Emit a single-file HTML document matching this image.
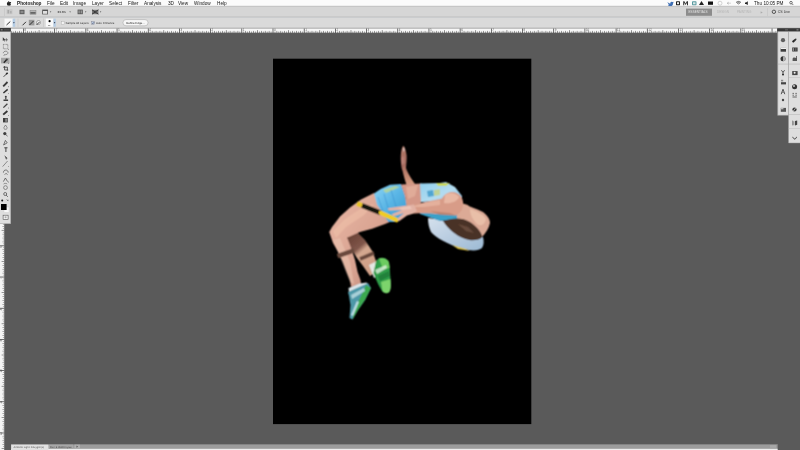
<!DOCTYPE html>
<html><head><meta charset="utf-8">
<style>
*{margin:0;padding:0}
html,body{width:800px;height:450px;overflow:hidden;background:#5a5a5a}
svg{position:absolute;left:0;top:0;font-family:"Liberation Sans",sans-serif}
#chrome{will-change:transform}
</style></head><body>
<svg width="800" height="450" viewBox="0 0 800 450"><rect x="273" y="58.7" width="258.3" height="365.4" fill="#000"/><defs>
<filter id="bl" x="-10%" y="-10%" width="120%" height="120%"><feConvolveMatrix order="3" kernelMatrix="1 2 1 2 4 2 1 2 1" divisor="16" preserveAlpha="false" edgeMode="none"/></filter>
<linearGradient id="gThigh" x1="0" y1="0" x2="1" y2="1">
<stop offset="0" stop-color="#eab8a6"/><stop offset="0.6" stop-color="#d8a290"/><stop offset="1" stop-color="#bc8878"/>
</linearGradient>
<linearGradient id="gArm" x1="0" y1="0" x2="0" y2="1">
<stop offset="0" stop-color="#e8b8a0"/><stop offset="1" stop-color="#c08068"/>
</linearGradient>
<linearGradient id="gShorts" x1="0" y1="0" x2="1" y2="1">
<stop offset="0" stop-color="#8cd4f4"/><stop offset="0.5" stop-color="#58b4e4"/><stop offset="1" stop-color="#3a98cc"/>
</linearGradient>
<linearGradient id="gTop" x1="0" y1="0" x2="1" y2="1">
<stop offset="0" stop-color="#90d0ee"/><stop offset="0.55" stop-color="#b4dcf0"/><stop offset="1" stop-color="#68b8e0"/>
</linearGradient>
<linearGradient id="gBib" x1="0" y1="0" x2="1" y2="1">
<stop offset="0" stop-color="#d4e0ec"/><stop offset="0.5" stop-color="#b8cce0"/><stop offset="1" stop-color="#9cbad4"/>
</linearGradient>
<linearGradient id="gBack" x1="350" y1="236" x2="372" y2="262" gradientUnits="userSpaceOnUse">
<stop offset="0" stop-color="#6a4236"/><stop offset="0.42" stop-color="#80564a"/><stop offset="0.58" stop-color="#d4a890"/><stop offset="1" stop-color="#d0a088"/>
</linearGradient>
<linearGradient id="gRaise" x1="0" y1="145" x2="0" y2="186" gradientUnits="userSpaceOnUse">
<stop offset="0" stop-color="#b07868"/><stop offset="0.5" stop-color="#a86c60"/><stop offset="0.8" stop-color="#c88c74"/><stop offset="1" stop-color="#d8a088"/>
</linearGradient>
</defs>
<g filter="url(#bl)">
<!-- bib / flap -->
<path d="M428 218 C438 219 448 221 456 227 C464 233 472 238 483 237 C484 241 484 245 482 248 C478 251.5 470 251 460 248 C448 244 436 238 431 232 C429 228 428 223 428 218 Z" fill="url(#gBib)"/>
<path d="M452 245 L466 249 L470 251 L458 249 Z" fill="#d8c040"/>
<!-- raised arm -->
<path d="M403.4 145.8 C404.9 147 406 151 406.6 155.5 C406.9 160 406.2 164 406 168 C407.6 173 410.8 178 416 185.5 L407 186 C405.2 181 403.6 175.5 402.6 171 C401.2 167.5 400.6 161 400.8 155.5 C401 150.5 402 147 403.4 145.8 Z" fill="url(#gRaise)"/>
<path d="M402.6 148.5 L404.2 147 L405 150 L403.5 152 Z" fill="#e0c8c0" opacity="0.8"/><path d="M401 158 L404 156 L404.5 163 L402 165 Z" fill="#c89088" opacity="0.5"/>
<!-- back shin (darker) -->
<path d="M345 237 L357 232 L365 240 L372.8 252 L377 264 L379 270 L370 276 L363 266 L357 258 L352 250 Z" fill="url(#gBack)"/>
<!-- front leg thigh + shin -->
<path d="M374 193 L361 199.5 L350 207.5 L340 216.5 L332 227 L329.2 232 L333 243 L338.7 253 L343 262 L346 270 L350 280 L351 287 L361 284 L360.5 280 L357.6 272 L355 260 L351.4 248.7 L347 237.5 L349.8 236.4 L359.8 232 L372 228.7 L385 224 L392 221 L385 215 Z" fill="url(#gThigh)"/>
<path d="M333 231 L345 219 L360 209 L374 204 L364 215 L346 227 L336 238 Z" fill="#eec0a8" opacity="0.6"/><path d="M333 240 L340 238 L350 262 L354 284 L350 282 L342 262 Z" fill="#ecc8b4" opacity="0.5"/>
<!-- bands -->
<path d="M337.5 256.2 L354 250.3" stroke="#6a4a3c" stroke-width="4.6"/>
<path d="M360 259 L374 253" stroke="#6a4a3c" stroke-width="3.6"/>
<!-- socks -->
<path d="M348.5 288 L360 283.5 L366.5 282.5 L368.5 285.5 L349 292.5 Z" fill="#dce6ea"/>
<path d="M369 265 L379 260 L383 272 L374 278 Z" fill="#e4e8e4"/>
<!-- back shoe -->
<path d="M376 261 C378 258 382 256.8 385.5 258.5 C389 260.5 389.8 266 390 272 C390.5 280 391.5 287 389.5 291.5 C388 294 384 293.5 382 291 C379.5 287 376 280 373.5 273 Z" fill="#2f9c48"/>
<path d="M379 258.5 C382 257 387 258.5 389 262 L389.8 268 L383 269 Z" fill="#6ccc60"/>
<path d="M381 282 L390.4 279 C391 284 391.2 289 389.5 291.5 C388 294 384 293.5 382.5 291 Z" fill="#7cd46c"/>
<path d="M375 270 L386 265 L387 268 L377 274 Z" fill="#e0f0e0" opacity="0.8"/><path d="M378 276 L389 271 L390 276 L380 281 Z" fill="#1e7a38" opacity="0.8"/>
<!-- front shoe -->
<path d="M348 292 L358 287.5 L368 283 L371 288 L365 300 L358 310 L352.5 319.5 L349.5 318 L350.5 305 L349 296 Z" fill="#4e98a8"/>
<path d="M366 285 L371 288 L365 300 L358 310 L352.5 319.5 L354 310 L360 298 Z" fill="#3aa850"/>
<path d="M351 295 L364 288 L365 291 L352 299 Z" fill="#a8d0d8"/>
<path d="M351 315 L357 301 L359 302 L353 316 Z" fill="#c8e4f0" opacity="0.9"/>
<!-- shorts -->
<path d="M374 193.6 L380.6 189 L390 184.7 L401 184 L405 195 L407 205 L405 214 L397 222 L388.3 222 L381.7 211.3 L377 204.7 Z" fill="url(#gShorts)"/>
<path d="M383 190 L395 186 L400 187 L386 193 Z" fill="#d8e070" opacity="0.6"/>
<path d="M384 194 L390 214 M391 190 L397 210 M378 197 L384 214" stroke="#3a90d0" stroke-width="1" opacity="0.6"/>
<!-- bar -->
<path d="M357 203.5 L362 205.5" stroke="#e8c428" stroke-width="4.8"/>
<path d="M362 205.5 L381 213" stroke="#18180c" stroke-width="4.8"/>
<path d="M381 213 L396.5 220" stroke="#f0cc20" stroke-width="4.6" stroke-linecap="round"/>
<!-- midriff -->
<path d="M401 184.5 L421.5 183.5 L423 200 L418 206 L407 209 L405 196 Z" fill="#d49888"/>
<path d="M406 187 L418 185 L415 196 L408 199 Z" fill="#e8b8a4" opacity="0.6"/>
<!-- top -->
<path d="M420 183.5 L440 183 L446 182 L455 187 L462 196 L462 205 L445 201 L421 202 Z" fill="url(#gTop)"/><path d="M427 191 L433 190 L434 196 L428 197 Z" fill="#3a98c8" opacity="0.8"/><path d="M434 190 L440 189 L440 195 L434 196 Z" fill="#c8d070" opacity="0.7"/>
<path d="M436 183 L450 183 L446 186 L438 186 Z" fill="#c8d860"/>
<!-- blue side under arm -->
<path d="M417 205 L440 211 L458 213 L462 210 L459 220 L440 221 L420 214 Z" fill="#3aa0c8"/>
<!-- neck -->
<path d="M458 202 L468 205 L474 214 L468 219 L458 214 Z" fill="#c89078"/>
<!-- hair -->

<!-- face -->
<path d="M459 203 C468 205 476 209 483 212 C487 215 490 219 490 223 C489 228 486 233 481 238 C474 239 466 235 461 228 C457 222 455 212 459 203 Z" fill="#dcaa96"/>
<path d="M470 209 C476 211 483 214 486 219 C485 224 481 227 477 224 C473 220 470 215 470 209 Z" fill="#ecc4ac" opacity="0.8"/>
<!-- hair2 --><path d="M443 221 C452 218 462 217 470 222 C476 226 481 231 482.5 237 C479 240.5 471 241.5 464 238.5 C456 235.5 448 229 443 221 Z" fill="#4a3226"/><path d="M458 224 L468 227 L474 233 L466 231 Z" fill="#7a5a48" opacity="0.6"/>
<!-- shoulder / upper arm -->
<path d="M400 208 C415 204 430 201 442 198.5 C446 191 456 189.5 461.5 197 C465 204 463 212 456 215.5 C446 215.5 430 212.5 415 213.5 L404 214 Z" fill="#d89c88"/>
<path d="M445 195 C449 192 455 192 459 197 C457 202 450 204 444 203 Z" fill="#f0c4b0" opacity="0.7"/>
<!-- forearm -->

<path d="M440 200 L424 203 L410 207 L424 207 L440 205 Z" fill="#ecbeaa" opacity="0.6"/><path d="M430 211 L450 213 L456 215.5 L440 215 Z" fill="#a8705c" opacity="0.5"/>
<!-- hand -->
<path d="M414 204.5 L400 206.5 L388 208.3 L388.5 210.6 L402 210 L392 214.3 L393 216.6 L404 213 L397 219 L399 221.2 L407 215.5 L412 214 L417 211 Z" fill="#e2b2a4"/>
<path d="M398 207.8 L410 206 L412 209 L402 210 Z" fill="#f0ccc0" opacity="0.7"/>
</g>
</svg><svg id="chrome" width="800" height="450" viewBox="0 0 800 450"><rect x="0" y="28.2" width="777" height="4.8" fill="#f7f7f7"/><rect x="0" y="32.6" width="777" height="0.5" fill="#777"/><rect x="11.48" y="30.9" width="0.6" height="2.1" fill="#555"/><rect x="13.43" y="31.5" width="0.6" height="1.5" fill="#666"/><rect x="15.38" y="30.9" width="0.6" height="2.1" fill="#555"/><rect x="17.33" y="31.5" width="0.6" height="1.5" fill="#666"/><rect x="19.28" y="30.9" width="0.6" height="2.1" fill="#555"/><rect x="21.23" y="31.5" width="0.6" height="1.5" fill="#666"/><rect x="23.13" y="28.3" width="0.7" height="4.7" fill="#333"/><rect x="25.13" y="31.5" width="0.6" height="1.5" fill="#666"/><rect x="27.08" y="30.9" width="0.6" height="2.1" fill="#555"/><rect x="29.03" y="31.5" width="0.6" height="1.5" fill="#666"/><rect x="30.98" y="30.9" width="0.6" height="2.1" fill="#555"/><rect x="32.93" y="31.5" width="0.6" height="1.5" fill="#666"/><rect x="34.88" y="30.9" width="0.6" height="2.1" fill="#555"/><rect x="36.83" y="31.5" width="0.6" height="1.5" fill="#666"/><rect x="38.77" y="30.2" width="0.6" height="2.8" fill="#444"/><rect x="40.72" y="31.5" width="0.6" height="1.5" fill="#666"/><rect x="42.67" y="30.9" width="0.6" height="2.1" fill="#555"/><rect x="44.62" y="31.5" width="0.6" height="1.5" fill="#666"/><rect x="46.57" y="30.9" width="0.6" height="2.1" fill="#555"/><rect x="48.52" y="31.5" width="0.6" height="1.5" fill="#666"/><rect x="50.47" y="30.9" width="0.6" height="2.1" fill="#555"/><rect x="52.42" y="31.5" width="0.6" height="1.5" fill="#666"/><text x="24.48" y="31.2" font-size="3" fill="#555">8</text><rect x="54.32" y="28.3" width="0.7" height="4.7" fill="#333"/><rect x="56.32" y="31.5" width="0.6" height="1.5" fill="#666"/><rect x="58.27" y="30.9" width="0.6" height="2.1" fill="#555"/><rect x="60.22" y="31.5" width="0.6" height="1.5" fill="#666"/><rect x="62.17" y="30.9" width="0.6" height="2.1" fill="#555"/><rect x="64.12" y="31.5" width="0.6" height="1.5" fill="#666"/><rect x="66.07" y="30.9" width="0.6" height="2.1" fill="#555"/><rect x="68.02" y="31.5" width="0.6" height="1.5" fill="#666"/><rect x="69.96" y="30.2" width="0.6" height="2.8" fill="#444"/><rect x="71.91" y="31.5" width="0.6" height="1.5" fill="#666"/><rect x="73.86" y="30.9" width="0.6" height="2.1" fill="#555"/><rect x="75.81" y="31.5" width="0.6" height="1.5" fill="#666"/><rect x="77.76" y="30.9" width="0.6" height="2.1" fill="#555"/><rect x="79.71" y="31.5" width="0.6" height="1.5" fill="#666"/><rect x="81.66" y="30.9" width="0.6" height="2.1" fill="#555"/><rect x="83.61" y="31.5" width="0.6" height="1.5" fill="#666"/><text x="55.67" y="31.2" font-size="3" fill="#555">7</text><rect x="85.51" y="28.3" width="0.7" height="4.7" fill="#333"/><rect x="87.51" y="31.5" width="0.6" height="1.5" fill="#666"/><rect x="89.46" y="30.9" width="0.6" height="2.1" fill="#555"/><rect x="91.41" y="31.5" width="0.6" height="1.5" fill="#666"/><rect x="93.36" y="30.9" width="0.6" height="2.1" fill="#555"/><rect x="95.31" y="31.5" width="0.6" height="1.5" fill="#666"/><rect x="97.26" y="30.9" width="0.6" height="2.1" fill="#555"/><rect x="99.21" y="31.5" width="0.6" height="1.5" fill="#666"/><rect x="101.15" y="30.2" width="0.6" height="2.8" fill="#444"/><rect x="103.10" y="31.5" width="0.6" height="1.5" fill="#666"/><rect x="105.05" y="30.9" width="0.6" height="2.1" fill="#555"/><rect x="107.00" y="31.5" width="0.6" height="1.5" fill="#666"/><rect x="108.95" y="30.9" width="0.6" height="2.1" fill="#555"/><rect x="110.90" y="31.5" width="0.6" height="1.5" fill="#666"/><rect x="112.85" y="30.9" width="0.6" height="2.1" fill="#555"/><rect x="114.80" y="31.5" width="0.6" height="1.5" fill="#666"/><text x="86.86" y="31.2" font-size="3" fill="#555">6</text><rect x="116.70" y="28.3" width="0.7" height="4.7" fill="#333"/><rect x="118.70" y="31.5" width="0.6" height="1.5" fill="#666"/><rect x="120.65" y="30.9" width="0.6" height="2.1" fill="#555"/><rect x="122.60" y="31.5" width="0.6" height="1.5" fill="#666"/><rect x="124.55" y="30.9" width="0.6" height="2.1" fill="#555"/><rect x="126.50" y="31.5" width="0.6" height="1.5" fill="#666"/><rect x="128.45" y="30.9" width="0.6" height="2.1" fill="#555"/><rect x="130.40" y="31.5" width="0.6" height="1.5" fill="#666"/><rect x="132.34" y="30.2" width="0.6" height="2.8" fill="#444"/><rect x="134.29" y="31.5" width="0.6" height="1.5" fill="#666"/><rect x="136.24" y="30.9" width="0.6" height="2.1" fill="#555"/><rect x="138.19" y="31.5" width="0.6" height="1.5" fill="#666"/><rect x="140.14" y="30.9" width="0.6" height="2.1" fill="#555"/><rect x="142.09" y="31.5" width="0.6" height="1.5" fill="#666"/><rect x="144.04" y="30.9" width="0.6" height="2.1" fill="#555"/><rect x="145.99" y="31.5" width="0.6" height="1.5" fill="#666"/><text x="118.05" y="31.2" font-size="3" fill="#555">5</text><rect x="147.89" y="28.3" width="0.7" height="4.7" fill="#333"/><rect x="149.89" y="31.5" width="0.6" height="1.5" fill="#666"/><rect x="151.84" y="30.9" width="0.6" height="2.1" fill="#555"/><rect x="153.79" y="31.5" width="0.6" height="1.5" fill="#666"/><rect x="155.74" y="30.9" width="0.6" height="2.1" fill="#555"/><rect x="157.69" y="31.5" width="0.6" height="1.5" fill="#666"/><rect x="159.64" y="30.9" width="0.6" height="2.1" fill="#555"/><rect x="161.59" y="31.5" width="0.6" height="1.5" fill="#666"/><rect x="163.53" y="30.2" width="0.6" height="2.8" fill="#444"/><rect x="165.48" y="31.5" width="0.6" height="1.5" fill="#666"/><rect x="167.43" y="30.9" width="0.6" height="2.1" fill="#555"/><rect x="169.38" y="31.5" width="0.6" height="1.5" fill="#666"/><rect x="171.33" y="30.9" width="0.6" height="2.1" fill="#555"/><rect x="173.28" y="31.5" width="0.6" height="1.5" fill="#666"/><rect x="175.23" y="30.9" width="0.6" height="2.1" fill="#555"/><rect x="177.18" y="31.5" width="0.6" height="1.5" fill="#666"/><text x="149.24" y="31.2" font-size="3" fill="#555">4</text><rect x="179.08" y="28.3" width="0.7" height="4.7" fill="#333"/><rect x="181.08" y="31.5" width="0.6" height="1.5" fill="#666"/><rect x="183.03" y="30.9" width="0.6" height="2.1" fill="#555"/><rect x="184.98" y="31.5" width="0.6" height="1.5" fill="#666"/><rect x="186.93" y="30.9" width="0.6" height="2.1" fill="#555"/><rect x="188.88" y="31.5" width="0.6" height="1.5" fill="#666"/><rect x="190.83" y="30.9" width="0.6" height="2.1" fill="#555"/><rect x="192.78" y="31.5" width="0.6" height="1.5" fill="#666"/><rect x="194.72" y="30.2" width="0.6" height="2.8" fill="#444"/><rect x="196.67" y="31.5" width="0.6" height="1.5" fill="#666"/><rect x="198.62" y="30.9" width="0.6" height="2.1" fill="#555"/><rect x="200.57" y="31.5" width="0.6" height="1.5" fill="#666"/><rect x="202.52" y="30.9" width="0.6" height="2.1" fill="#555"/><rect x="204.47" y="31.5" width="0.6" height="1.5" fill="#666"/><rect x="206.42" y="30.9" width="0.6" height="2.1" fill="#555"/><rect x="208.37" y="31.5" width="0.6" height="1.5" fill="#666"/><text x="180.43" y="31.2" font-size="3" fill="#555">3</text><rect x="210.27" y="28.3" width="0.7" height="4.7" fill="#333"/><rect x="212.27" y="31.5" width="0.6" height="1.5" fill="#666"/><rect x="214.22" y="30.9" width="0.6" height="2.1" fill="#555"/><rect x="216.17" y="31.5" width="0.6" height="1.5" fill="#666"/><rect x="218.12" y="30.9" width="0.6" height="2.1" fill="#555"/><rect x="220.07" y="31.5" width="0.6" height="1.5" fill="#666"/><rect x="222.02" y="30.9" width="0.6" height="2.1" fill="#555"/><rect x="223.97" y="31.5" width="0.6" height="1.5" fill="#666"/><rect x="225.91" y="30.2" width="0.6" height="2.8" fill="#444"/><rect x="227.86" y="31.5" width="0.6" height="1.5" fill="#666"/><rect x="229.81" y="30.9" width="0.6" height="2.1" fill="#555"/><rect x="231.76" y="31.5" width="0.6" height="1.5" fill="#666"/><rect x="233.71" y="30.9" width="0.6" height="2.1" fill="#555"/><rect x="235.66" y="31.5" width="0.6" height="1.5" fill="#666"/><rect x="237.61" y="30.9" width="0.6" height="2.1" fill="#555"/><rect x="239.56" y="31.5" width="0.6" height="1.5" fill="#666"/><text x="211.62" y="31.2" font-size="3" fill="#555">2</text><rect x="241.46" y="28.3" width="0.7" height="4.7" fill="#333"/><rect x="243.46" y="31.5" width="0.6" height="1.5" fill="#666"/><rect x="245.41" y="30.9" width="0.6" height="2.1" fill="#555"/><rect x="247.36" y="31.5" width="0.6" height="1.5" fill="#666"/><rect x="249.31" y="30.9" width="0.6" height="2.1" fill="#555"/><rect x="251.26" y="31.5" width="0.6" height="1.5" fill="#666"/><rect x="253.21" y="30.9" width="0.6" height="2.1" fill="#555"/><rect x="255.16" y="31.5" width="0.6" height="1.5" fill="#666"/><rect x="257.11" y="30.2" width="0.6" height="2.8" fill="#444"/><rect x="259.05" y="31.5" width="0.6" height="1.5" fill="#666"/><rect x="261.00" y="30.9" width="0.6" height="2.1" fill="#555"/><rect x="262.95" y="31.5" width="0.6" height="1.5" fill="#666"/><rect x="264.90" y="30.9" width="0.6" height="2.1" fill="#555"/><rect x="266.85" y="31.5" width="0.6" height="1.5" fill="#666"/><rect x="268.80" y="30.9" width="0.6" height="2.1" fill="#555"/><rect x="270.75" y="31.5" width="0.6" height="1.5" fill="#666"/><text x="242.81" y="31.2" font-size="3" fill="#555">1</text><rect x="272.65" y="28.3" width="0.7" height="4.7" fill="#333"/><rect x="274.65" y="31.5" width="0.6" height="1.5" fill="#666"/><rect x="276.60" y="30.9" width="0.6" height="2.1" fill="#555"/><rect x="278.55" y="31.5" width="0.6" height="1.5" fill="#666"/><rect x="280.50" y="30.9" width="0.6" height="2.1" fill="#555"/><rect x="282.45" y="31.5" width="0.6" height="1.5" fill="#666"/><rect x="284.40" y="30.9" width="0.6" height="2.1" fill="#555"/><rect x="286.35" y="31.5" width="0.6" height="1.5" fill="#666"/><rect x="288.30" y="30.2" width="0.6" height="2.8" fill="#444"/><rect x="290.24" y="31.5" width="0.6" height="1.5" fill="#666"/><rect x="292.19" y="30.9" width="0.6" height="2.1" fill="#555"/><rect x="294.14" y="31.5" width="0.6" height="1.5" fill="#666"/><rect x="296.09" y="30.9" width="0.6" height="2.1" fill="#555"/><rect x="298.04" y="31.5" width="0.6" height="1.5" fill="#666"/><rect x="299.99" y="30.9" width="0.6" height="2.1" fill="#555"/><rect x="301.94" y="31.5" width="0.6" height="1.5" fill="#666"/><text x="274.00" y="31.2" font-size="3" fill="#555">0</text><rect x="303.84" y="28.3" width="0.7" height="4.7" fill="#333"/><rect x="305.84" y="31.5" width="0.6" height="1.5" fill="#666"/><rect x="307.79" y="30.9" width="0.6" height="2.1" fill="#555"/><rect x="309.74" y="31.5" width="0.6" height="1.5" fill="#666"/><rect x="311.69" y="30.9" width="0.6" height="2.1" fill="#555"/><rect x="313.64" y="31.5" width="0.6" height="1.5" fill="#666"/><rect x="315.59" y="30.9" width="0.6" height="2.1" fill="#555"/><rect x="317.54" y="31.5" width="0.6" height="1.5" fill="#666"/><rect x="319.49" y="30.2" width="0.6" height="2.8" fill="#444"/><rect x="321.43" y="31.5" width="0.6" height="1.5" fill="#666"/><rect x="323.38" y="30.9" width="0.6" height="2.1" fill="#555"/><rect x="325.33" y="31.5" width="0.6" height="1.5" fill="#666"/><rect x="327.28" y="30.9" width="0.6" height="2.1" fill="#555"/><rect x="329.23" y="31.5" width="0.6" height="1.5" fill="#666"/><rect x="331.18" y="30.9" width="0.6" height="2.1" fill="#555"/><rect x="333.13" y="31.5" width="0.6" height="1.5" fill="#666"/><text x="305.19" y="31.2" font-size="3" fill="#555">1</text><rect x="335.03" y="28.3" width="0.7" height="4.7" fill="#333"/><rect x="337.03" y="31.5" width="0.6" height="1.5" fill="#666"/><rect x="338.98" y="30.9" width="0.6" height="2.1" fill="#555"/><rect x="340.93" y="31.5" width="0.6" height="1.5" fill="#666"/><rect x="342.88" y="30.9" width="0.6" height="2.1" fill="#555"/><rect x="344.83" y="31.5" width="0.6" height="1.5" fill="#666"/><rect x="346.78" y="30.9" width="0.6" height="2.1" fill="#555"/><rect x="348.73" y="31.5" width="0.6" height="1.5" fill="#666"/><rect x="350.68" y="30.2" width="0.6" height="2.8" fill="#444"/><rect x="352.62" y="31.5" width="0.6" height="1.5" fill="#666"/><rect x="354.57" y="30.9" width="0.6" height="2.1" fill="#555"/><rect x="356.52" y="31.5" width="0.6" height="1.5" fill="#666"/><rect x="358.47" y="30.9" width="0.6" height="2.1" fill="#555"/><rect x="360.42" y="31.5" width="0.6" height="1.5" fill="#666"/><rect x="362.37" y="30.9" width="0.6" height="2.1" fill="#555"/><rect x="364.32" y="31.5" width="0.6" height="1.5" fill="#666"/><text x="336.38" y="31.2" font-size="3" fill="#555">2</text><rect x="366.22" y="28.3" width="0.7" height="4.7" fill="#333"/><rect x="368.22" y="31.5" width="0.6" height="1.5" fill="#666"/><rect x="370.17" y="30.9" width="0.6" height="2.1" fill="#555"/><rect x="372.12" y="31.5" width="0.6" height="1.5" fill="#666"/><rect x="374.07" y="30.9" width="0.6" height="2.1" fill="#555"/><rect x="376.02" y="31.5" width="0.6" height="1.5" fill="#666"/><rect x="377.97" y="30.9" width="0.6" height="2.1" fill="#555"/><rect x="379.92" y="31.5" width="0.6" height="1.5" fill="#666"/><rect x="381.87" y="30.2" width="0.6" height="2.8" fill="#444"/><rect x="383.81" y="31.5" width="0.6" height="1.5" fill="#666"/><rect x="385.76" y="30.9" width="0.6" height="2.1" fill="#555"/><rect x="387.71" y="31.5" width="0.6" height="1.5" fill="#666"/><rect x="389.66" y="30.9" width="0.6" height="2.1" fill="#555"/><rect x="391.61" y="31.5" width="0.6" height="1.5" fill="#666"/><rect x="393.56" y="30.9" width="0.6" height="2.1" fill="#555"/><rect x="395.51" y="31.5" width="0.6" height="1.5" fill="#666"/><text x="367.57" y="31.2" font-size="3" fill="#555">3</text><rect x="397.41" y="28.3" width="0.7" height="4.7" fill="#333"/><rect x="399.41" y="31.5" width="0.6" height="1.5" fill="#666"/><rect x="401.36" y="30.9" width="0.6" height="2.1" fill="#555"/><rect x="403.31" y="31.5" width="0.6" height="1.5" fill="#666"/><rect x="405.26" y="30.9" width="0.6" height="2.1" fill="#555"/><rect x="407.21" y="31.5" width="0.6" height="1.5" fill="#666"/><rect x="409.16" y="30.9" width="0.6" height="2.1" fill="#555"/><rect x="411.11" y="31.5" width="0.6" height="1.5" fill="#666"/><rect x="413.06" y="30.2" width="0.6" height="2.8" fill="#444"/><rect x="415.00" y="31.5" width="0.6" height="1.5" fill="#666"/><rect x="416.95" y="30.9" width="0.6" height="2.1" fill="#555"/><rect x="418.90" y="31.5" width="0.6" height="1.5" fill="#666"/><rect x="420.85" y="30.9" width="0.6" height="2.1" fill="#555"/><rect x="422.80" y="31.5" width="0.6" height="1.5" fill="#666"/><rect x="424.75" y="30.9" width="0.6" height="2.1" fill="#555"/><rect x="426.70" y="31.5" width="0.6" height="1.5" fill="#666"/><text x="398.76" y="31.2" font-size="3" fill="#555">4</text><rect x="428.60" y="28.3" width="0.7" height="4.7" fill="#333"/><rect x="430.60" y="31.5" width="0.6" height="1.5" fill="#666"/><rect x="432.55" y="30.9" width="0.6" height="2.1" fill="#555"/><rect x="434.50" y="31.5" width="0.6" height="1.5" fill="#666"/><rect x="436.45" y="30.9" width="0.6" height="2.1" fill="#555"/><rect x="438.40" y="31.5" width="0.6" height="1.5" fill="#666"/><rect x="440.35" y="30.9" width="0.6" height="2.1" fill="#555"/><rect x="442.30" y="31.5" width="0.6" height="1.5" fill="#666"/><rect x="444.25" y="30.2" width="0.6" height="2.8" fill="#444"/><rect x="446.19" y="31.5" width="0.6" height="1.5" fill="#666"/><rect x="448.14" y="30.9" width="0.6" height="2.1" fill="#555"/><rect x="450.09" y="31.5" width="0.6" height="1.5" fill="#666"/><rect x="452.04" y="30.9" width="0.6" height="2.1" fill="#555"/><rect x="453.99" y="31.5" width="0.6" height="1.5" fill="#666"/><rect x="455.94" y="30.9" width="0.6" height="2.1" fill="#555"/><rect x="457.89" y="31.5" width="0.6" height="1.5" fill="#666"/><text x="429.95" y="31.2" font-size="3" fill="#555">5</text><rect x="459.79" y="28.3" width="0.7" height="4.7" fill="#333"/><rect x="461.79" y="31.5" width="0.6" height="1.5" fill="#666"/><rect x="463.74" y="30.9" width="0.6" height="2.1" fill="#555"/><rect x="465.69" y="31.5" width="0.6" height="1.5" fill="#666"/><rect x="467.64" y="30.9" width="0.6" height="2.1" fill="#555"/><rect x="469.59" y="31.5" width="0.6" height="1.5" fill="#666"/><rect x="471.54" y="30.9" width="0.6" height="2.1" fill="#555"/><rect x="473.49" y="31.5" width="0.6" height="1.5" fill="#666"/><rect x="475.44" y="30.2" width="0.6" height="2.8" fill="#444"/><rect x="477.38" y="31.5" width="0.6" height="1.5" fill="#666"/><rect x="479.33" y="30.9" width="0.6" height="2.1" fill="#555"/><rect x="481.28" y="31.5" width="0.6" height="1.5" fill="#666"/><rect x="483.23" y="30.9" width="0.6" height="2.1" fill="#555"/><rect x="485.18" y="31.5" width="0.6" height="1.5" fill="#666"/><rect x="487.13" y="30.9" width="0.6" height="2.1" fill="#555"/><rect x="489.08" y="31.5" width="0.6" height="1.5" fill="#666"/><text x="461.14" y="31.2" font-size="3" fill="#555">6</text><rect x="490.98" y="28.3" width="0.7" height="4.7" fill="#333"/><rect x="492.98" y="31.5" width="0.6" height="1.5" fill="#666"/><rect x="494.93" y="30.9" width="0.6" height="2.1" fill="#555"/><rect x="496.88" y="31.5" width="0.6" height="1.5" fill="#666"/><rect x="498.83" y="30.9" width="0.6" height="2.1" fill="#555"/><rect x="500.78" y="31.5" width="0.6" height="1.5" fill="#666"/><rect x="502.73" y="30.9" width="0.6" height="2.1" fill="#555"/><rect x="504.68" y="31.5" width="0.6" height="1.5" fill="#666"/><rect x="506.63" y="30.2" width="0.6" height="2.8" fill="#444"/><rect x="508.57" y="31.5" width="0.6" height="1.5" fill="#666"/><rect x="510.52" y="30.9" width="0.6" height="2.1" fill="#555"/><rect x="512.47" y="31.5" width="0.6" height="1.5" fill="#666"/><rect x="514.42" y="30.9" width="0.6" height="2.1" fill="#555"/><rect x="516.37" y="31.5" width="0.6" height="1.5" fill="#666"/><rect x="518.32" y="30.9" width="0.6" height="2.1" fill="#555"/><rect x="520.27" y="31.5" width="0.6" height="1.5" fill="#666"/><text x="492.33" y="31.2" font-size="3" fill="#555">7</text><rect x="522.17" y="28.3" width="0.7" height="4.7" fill="#333"/><rect x="524.17" y="31.5" width="0.6" height="1.5" fill="#666"/><rect x="526.12" y="30.9" width="0.6" height="2.1" fill="#555"/><rect x="528.07" y="31.5" width="0.6" height="1.5" fill="#666"/><rect x="530.02" y="30.9" width="0.6" height="2.1" fill="#555"/><rect x="531.97" y="31.5" width="0.6" height="1.5" fill="#666"/><rect x="533.92" y="30.9" width="0.6" height="2.1" fill="#555"/><rect x="535.87" y="31.5" width="0.6" height="1.5" fill="#666"/><rect x="537.82" y="30.2" width="0.6" height="2.8" fill="#444"/><rect x="539.76" y="31.5" width="0.6" height="1.5" fill="#666"/><rect x="541.71" y="30.9" width="0.6" height="2.1" fill="#555"/><rect x="543.66" y="31.5" width="0.6" height="1.5" fill="#666"/><rect x="545.61" y="30.9" width="0.6" height="2.1" fill="#555"/><rect x="547.56" y="31.5" width="0.6" height="1.5" fill="#666"/><rect x="549.51" y="30.9" width="0.6" height="2.1" fill="#555"/><rect x="551.46" y="31.5" width="0.6" height="1.5" fill="#666"/><text x="523.52" y="31.2" font-size="3" fill="#555">8</text><rect x="553.36" y="28.3" width="0.7" height="4.7" fill="#333"/><rect x="555.36" y="31.5" width="0.6" height="1.5" fill="#666"/><rect x="557.31" y="30.9" width="0.6" height="2.1" fill="#555"/><rect x="559.26" y="31.5" width="0.6" height="1.5" fill="#666"/><rect x="561.21" y="30.9" width="0.6" height="2.1" fill="#555"/><rect x="563.16" y="31.5" width="0.6" height="1.5" fill="#666"/><rect x="565.11" y="30.9" width="0.6" height="2.1" fill="#555"/><rect x="567.06" y="31.5" width="0.6" height="1.5" fill="#666"/><rect x="569.01" y="30.2" width="0.6" height="2.8" fill="#444"/><rect x="570.95" y="31.5" width="0.6" height="1.5" fill="#666"/><rect x="572.90" y="30.9" width="0.6" height="2.1" fill="#555"/><rect x="574.85" y="31.5" width="0.6" height="1.5" fill="#666"/><rect x="576.80" y="30.9" width="0.6" height="2.1" fill="#555"/><rect x="578.75" y="31.5" width="0.6" height="1.5" fill="#666"/><rect x="580.70" y="30.9" width="0.6" height="2.1" fill="#555"/><rect x="582.65" y="31.5" width="0.6" height="1.5" fill="#666"/><text x="554.71" y="31.2" font-size="3" fill="#555">9</text><rect x="584.55" y="28.3" width="0.7" height="4.7" fill="#333"/><rect x="586.55" y="31.5" width="0.6" height="1.5" fill="#666"/><rect x="588.50" y="30.9" width="0.6" height="2.1" fill="#555"/><rect x="590.45" y="31.5" width="0.6" height="1.5" fill="#666"/><rect x="592.40" y="30.9" width="0.6" height="2.1" fill="#555"/><rect x="594.35" y="31.5" width="0.6" height="1.5" fill="#666"/><rect x="596.30" y="30.9" width="0.6" height="2.1" fill="#555"/><rect x="598.25" y="31.5" width="0.6" height="1.5" fill="#666"/><rect x="600.20" y="30.2" width="0.6" height="2.8" fill="#444"/><rect x="602.14" y="31.5" width="0.6" height="1.5" fill="#666"/><rect x="604.09" y="30.9" width="0.6" height="2.1" fill="#555"/><rect x="606.04" y="31.5" width="0.6" height="1.5" fill="#666"/><rect x="607.99" y="30.9" width="0.6" height="2.1" fill="#555"/><rect x="609.94" y="31.5" width="0.6" height="1.5" fill="#666"/><rect x="611.89" y="30.9" width="0.6" height="2.1" fill="#555"/><rect x="613.84" y="31.5" width="0.6" height="1.5" fill="#666"/><text x="585.90" y="31.2" font-size="3" fill="#555">10</text><rect x="615.74" y="28.3" width="0.7" height="4.7" fill="#333"/><rect x="617.74" y="31.5" width="0.6" height="1.5" fill="#666"/><rect x="619.69" y="30.9" width="0.6" height="2.1" fill="#555"/><rect x="621.64" y="31.5" width="0.6" height="1.5" fill="#666"/><rect x="623.59" y="30.9" width="0.6" height="2.1" fill="#555"/><rect x="625.54" y="31.5" width="0.6" height="1.5" fill="#666"/><rect x="627.49" y="30.9" width="0.6" height="2.1" fill="#555"/><rect x="629.44" y="31.5" width="0.6" height="1.5" fill="#666"/><rect x="631.39" y="30.2" width="0.6" height="2.8" fill="#444"/><rect x="633.33" y="31.5" width="0.6" height="1.5" fill="#666"/><rect x="635.28" y="30.9" width="0.6" height="2.1" fill="#555"/><rect x="637.23" y="31.5" width="0.6" height="1.5" fill="#666"/><rect x="639.18" y="30.9" width="0.6" height="2.1" fill="#555"/><rect x="641.13" y="31.5" width="0.6" height="1.5" fill="#666"/><rect x="643.08" y="30.9" width="0.6" height="2.1" fill="#555"/><rect x="645.03" y="31.5" width="0.6" height="1.5" fill="#666"/><text x="617.09" y="31.2" font-size="3" fill="#555">11</text><rect x="646.93" y="28.3" width="0.7" height="4.7" fill="#333"/><rect x="648.93" y="31.5" width="0.6" height="1.5" fill="#666"/><rect x="650.88" y="30.9" width="0.6" height="2.1" fill="#555"/><rect x="652.83" y="31.5" width="0.6" height="1.5" fill="#666"/><rect x="654.78" y="30.9" width="0.6" height="2.1" fill="#555"/><rect x="656.73" y="31.5" width="0.6" height="1.5" fill="#666"/><rect x="658.68" y="30.9" width="0.6" height="2.1" fill="#555"/><rect x="660.63" y="31.5" width="0.6" height="1.5" fill="#666"/><rect x="662.58" y="30.2" width="0.6" height="2.8" fill="#444"/><rect x="664.52" y="31.5" width="0.6" height="1.5" fill="#666"/><rect x="666.47" y="30.9" width="0.6" height="2.1" fill="#555"/><rect x="668.42" y="31.5" width="0.6" height="1.5" fill="#666"/><rect x="670.37" y="30.9" width="0.6" height="2.1" fill="#555"/><rect x="672.32" y="31.5" width="0.6" height="1.5" fill="#666"/><rect x="674.27" y="30.9" width="0.6" height="2.1" fill="#555"/><rect x="676.22" y="31.5" width="0.6" height="1.5" fill="#666"/><text x="648.28" y="31.2" font-size="3" fill="#555">12</text><rect x="678.12" y="28.3" width="0.7" height="4.7" fill="#333"/><rect x="680.12" y="31.5" width="0.6" height="1.5" fill="#666"/><rect x="682.07" y="30.9" width="0.6" height="2.1" fill="#555"/><rect x="684.02" y="31.5" width="0.6" height="1.5" fill="#666"/><rect x="685.97" y="30.9" width="0.6" height="2.1" fill="#555"/><rect x="687.92" y="31.5" width="0.6" height="1.5" fill="#666"/><rect x="689.87" y="30.9" width="0.6" height="2.1" fill="#555"/><rect x="691.82" y="31.5" width="0.6" height="1.5" fill="#666"/><rect x="693.77" y="30.2" width="0.6" height="2.8" fill="#444"/><rect x="695.71" y="31.5" width="0.6" height="1.5" fill="#666"/><rect x="697.66" y="30.9" width="0.6" height="2.1" fill="#555"/><rect x="699.61" y="31.5" width="0.6" height="1.5" fill="#666"/><rect x="701.56" y="30.9" width="0.6" height="2.1" fill="#555"/><rect x="703.51" y="31.5" width="0.6" height="1.5" fill="#666"/><rect x="705.46" y="30.9" width="0.6" height="2.1" fill="#555"/><rect x="707.41" y="31.5" width="0.6" height="1.5" fill="#666"/><text x="679.47" y="31.2" font-size="3" fill="#555">13</text><rect x="709.31" y="28.3" width="0.7" height="4.7" fill="#333"/><rect x="711.31" y="31.5" width="0.6" height="1.5" fill="#666"/><rect x="713.26" y="30.9" width="0.6" height="2.1" fill="#555"/><rect x="715.21" y="31.5" width="0.6" height="1.5" fill="#666"/><rect x="717.16" y="30.9" width="0.6" height="2.1" fill="#555"/><rect x="719.11" y="31.5" width="0.6" height="1.5" fill="#666"/><rect x="721.06" y="30.9" width="0.6" height="2.1" fill="#555"/><rect x="723.01" y="31.5" width="0.6" height="1.5" fill="#666"/><rect x="724.96" y="30.2" width="0.6" height="2.8" fill="#444"/><rect x="726.90" y="31.5" width="0.6" height="1.5" fill="#666"/><rect x="728.85" y="30.9" width="0.6" height="2.1" fill="#555"/><rect x="730.80" y="31.5" width="0.6" height="1.5" fill="#666"/><rect x="732.75" y="30.9" width="0.6" height="2.1" fill="#555"/><rect x="734.70" y="31.5" width="0.6" height="1.5" fill="#666"/><rect x="736.65" y="30.9" width="0.6" height="2.1" fill="#555"/><rect x="738.60" y="31.5" width="0.6" height="1.5" fill="#666"/><text x="710.66" y="31.2" font-size="3" fill="#555">14</text><rect x="740.50" y="28.3" width="0.7" height="4.7" fill="#333"/><rect x="742.50" y="31.5" width="0.6" height="1.5" fill="#666"/><rect x="744.45" y="30.9" width="0.6" height="2.1" fill="#555"/><rect x="746.40" y="31.5" width="0.6" height="1.5" fill="#666"/><rect x="748.35" y="30.9" width="0.6" height="2.1" fill="#555"/><rect x="750.30" y="31.5" width="0.6" height="1.5" fill="#666"/><rect x="752.25" y="30.9" width="0.6" height="2.1" fill="#555"/><rect x="754.20" y="31.5" width="0.6" height="1.5" fill="#666"/><rect x="756.15" y="30.2" width="0.6" height="2.8" fill="#444"/><rect x="758.09" y="31.5" width="0.6" height="1.5" fill="#666"/><rect x="760.04" y="30.9" width="0.6" height="2.1" fill="#555"/><rect x="761.99" y="31.5" width="0.6" height="1.5" fill="#666"/><rect x="763.94" y="30.9" width="0.6" height="2.1" fill="#555"/><rect x="765.89" y="31.5" width="0.6" height="1.5" fill="#666"/><rect x="767.84" y="30.9" width="0.6" height="2.1" fill="#555"/><rect x="769.79" y="31.5" width="0.6" height="1.5" fill="#666"/><text x="741.85" y="31.2" font-size="3" fill="#555">15</text><rect x="771.69" y="28.3" width="0.7" height="4.7" fill="#333"/><rect x="773.69" y="31.5" width="0.6" height="1.5" fill="#666"/><rect x="775.64" y="30.9" width="0.6" height="2.1" fill="#555"/><rect x="0" y="33" width="4.2" height="417" fill="#f4f4f4"/><rect x="2.9" y="224.10" width="1.3" height="0.6" fill="#888"/><rect x="2.4" y="226.05" width="1.8" height="0.6" fill="#777"/><rect x="2.9" y="228.00" width="1.3" height="0.6" fill="#888"/><rect x="1.6" y="229.95" width="2.6" height="0.6" fill="#555"/><rect x="2.9" y="231.89" width="1.3" height="0.6" fill="#888"/><rect x="2.4" y="233.84" width="1.8" height="0.6" fill="#777"/><rect x="2.9" y="235.79" width="1.3" height="0.6" fill="#888"/><rect x="2.4" y="237.74" width="1.8" height="0.6" fill="#777"/><rect x="2.9" y="239.69" width="1.3" height="0.6" fill="#888"/><rect x="2.4" y="241.64" width="1.8" height="0.6" fill="#777"/><rect x="2.9" y="243.59" width="1.3" height="0.6" fill="#888"/><rect x="0" y="245.49" width="4.2" height="0.7" fill="#333"/><rect x="2.9" y="247.49" width="1.3" height="0.6" fill="#888"/><rect x="2.4" y="249.44" width="1.8" height="0.6" fill="#777"/><rect x="2.9" y="251.39" width="1.3" height="0.6" fill="#888"/><rect x="2.4" y="253.34" width="1.8" height="0.6" fill="#777"/><rect x="2.9" y="255.29" width="1.3" height="0.6" fill="#888"/><rect x="2.4" y="257.24" width="1.8" height="0.6" fill="#777"/><rect x="2.9" y="259.19" width="1.3" height="0.6" fill="#888"/><rect x="1.6" y="261.14" width="2.6" height="0.6" fill="#555"/><rect x="2.9" y="263.08" width="1.3" height="0.6" fill="#888"/><rect x="2.4" y="265.03" width="1.8" height="0.6" fill="#777"/><rect x="2.9" y="266.98" width="1.3" height="0.6" fill="#888"/><rect x="2.4" y="268.93" width="1.8" height="0.6" fill="#777"/><rect x="2.9" y="270.88" width="1.3" height="0.6" fill="#888"/><rect x="2.4" y="272.83" width="1.8" height="0.6" fill="#777"/><rect x="2.9" y="274.78" width="1.3" height="0.6" fill="#888"/><text x="1.6" y="247.84" font-size="2.8" fill="#555" transform="rotate(-90 1.6 247.84)">6</text><rect x="0" y="276.68" width="4.2" height="0.7" fill="#333"/><rect x="2.9" y="278.68" width="1.3" height="0.6" fill="#888"/><rect x="2.4" y="280.63" width="1.8" height="0.6" fill="#777"/><rect x="2.9" y="282.58" width="1.3" height="0.6" fill="#888"/><rect x="2.4" y="284.53" width="1.8" height="0.6" fill="#777"/><rect x="2.9" y="286.48" width="1.3" height="0.6" fill="#888"/><rect x="2.4" y="288.43" width="1.8" height="0.6" fill="#777"/><rect x="2.9" y="290.38" width="1.3" height="0.6" fill="#888"/><rect x="1.6" y="292.33" width="2.6" height="0.6" fill="#555"/><rect x="2.9" y="294.27" width="1.3" height="0.6" fill="#888"/><rect x="2.4" y="296.22" width="1.8" height="0.6" fill="#777"/><rect x="2.9" y="298.17" width="1.3" height="0.6" fill="#888"/><rect x="2.4" y="300.12" width="1.8" height="0.6" fill="#777"/><rect x="2.9" y="302.07" width="1.3" height="0.6" fill="#888"/><rect x="2.4" y="304.02" width="1.8" height="0.6" fill="#777"/><rect x="2.9" y="305.97" width="1.3" height="0.6" fill="#888"/><text x="1.6" y="279.03" font-size="2.8" fill="#555" transform="rotate(-90 1.6 279.03)">7</text><rect x="0" y="307.87" width="4.2" height="0.7" fill="#333"/><rect x="2.9" y="309.87" width="1.3" height="0.6" fill="#888"/><rect x="2.4" y="311.82" width="1.8" height="0.6" fill="#777"/><rect x="2.9" y="313.77" width="1.3" height="0.6" fill="#888"/><rect x="2.4" y="315.72" width="1.8" height="0.6" fill="#777"/><rect x="2.9" y="317.67" width="1.3" height="0.6" fill="#888"/><rect x="2.4" y="319.62" width="1.8" height="0.6" fill="#777"/><rect x="2.9" y="321.57" width="1.3" height="0.6" fill="#888"/><rect x="1.6" y="323.52" width="2.6" height="0.6" fill="#555"/><rect x="2.9" y="325.46" width="1.3" height="0.6" fill="#888"/><rect x="2.4" y="327.41" width="1.8" height="0.6" fill="#777"/><rect x="2.9" y="329.36" width="1.3" height="0.6" fill="#888"/><rect x="2.4" y="331.31" width="1.8" height="0.6" fill="#777"/><rect x="2.9" y="333.26" width="1.3" height="0.6" fill="#888"/><rect x="2.4" y="335.21" width="1.8" height="0.6" fill="#777"/><rect x="2.9" y="337.16" width="1.3" height="0.6" fill="#888"/><text x="1.6" y="310.22" font-size="2.8" fill="#555" transform="rotate(-90 1.6 310.22)">8</text><rect x="0" y="339.06" width="4.2" height="0.7" fill="#333"/><rect x="2.9" y="341.06" width="1.3" height="0.6" fill="#888"/><rect x="2.4" y="343.01" width="1.8" height="0.6" fill="#777"/><rect x="2.9" y="344.96" width="1.3" height="0.6" fill="#888"/><rect x="2.4" y="346.91" width="1.8" height="0.6" fill="#777"/><rect x="2.9" y="348.86" width="1.3" height="0.6" fill="#888"/><rect x="2.4" y="350.81" width="1.8" height="0.6" fill="#777"/><rect x="2.9" y="352.76" width="1.3" height="0.6" fill="#888"/><rect x="1.6" y="354.71" width="2.6" height="0.6" fill="#555"/><rect x="2.9" y="356.65" width="1.3" height="0.6" fill="#888"/><rect x="2.4" y="358.60" width="1.8" height="0.6" fill="#777"/><rect x="2.9" y="360.55" width="1.3" height="0.6" fill="#888"/><rect x="2.4" y="362.50" width="1.8" height="0.6" fill="#777"/><rect x="2.9" y="364.45" width="1.3" height="0.6" fill="#888"/><rect x="2.4" y="366.40" width="1.8" height="0.6" fill="#777"/><rect x="2.9" y="368.35" width="1.3" height="0.6" fill="#888"/><text x="1.6" y="341.41" font-size="2.8" fill="#555" transform="rotate(-90 1.6 341.41)">9</text><rect x="0" y="370.25" width="4.2" height="0.7" fill="#333"/><rect x="2.9" y="372.25" width="1.3" height="0.6" fill="#888"/><rect x="2.4" y="374.20" width="1.8" height="0.6" fill="#777"/><rect x="2.9" y="376.15" width="1.3" height="0.6" fill="#888"/><rect x="2.4" y="378.10" width="1.8" height="0.6" fill="#777"/><rect x="2.9" y="380.05" width="1.3" height="0.6" fill="#888"/><rect x="2.4" y="382.00" width="1.8" height="0.6" fill="#777"/><rect x="2.9" y="383.95" width="1.3" height="0.6" fill="#888"/><rect x="1.6" y="385.90" width="2.6" height="0.6" fill="#555"/><rect x="2.9" y="387.84" width="1.3" height="0.6" fill="#888"/><rect x="2.4" y="389.79" width="1.8" height="0.6" fill="#777"/><rect x="2.9" y="391.74" width="1.3" height="0.6" fill="#888"/><rect x="2.4" y="393.69" width="1.8" height="0.6" fill="#777"/><rect x="2.9" y="395.64" width="1.3" height="0.6" fill="#888"/><rect x="2.4" y="397.59" width="1.8" height="0.6" fill="#777"/><rect x="2.9" y="399.54" width="1.3" height="0.6" fill="#888"/><text x="1.6" y="372.60" font-size="2.8" fill="#555" transform="rotate(-90 1.6 372.60)">10</text><rect x="0" y="401.44" width="4.2" height="0.7" fill="#333"/><rect x="2.9" y="403.44" width="1.3" height="0.6" fill="#888"/><rect x="2.4" y="405.39" width="1.8" height="0.6" fill="#777"/><rect x="2.9" y="407.34" width="1.3" height="0.6" fill="#888"/><rect x="2.4" y="409.29" width="1.8" height="0.6" fill="#777"/><rect x="2.9" y="411.24" width="1.3" height="0.6" fill="#888"/><rect x="2.4" y="413.19" width="1.8" height="0.6" fill="#777"/><rect x="2.9" y="415.14" width="1.3" height="0.6" fill="#888"/><rect x="1.6" y="417.09" width="2.6" height="0.6" fill="#555"/><rect x="2.9" y="419.03" width="1.3" height="0.6" fill="#888"/><rect x="2.4" y="420.98" width="1.8" height="0.6" fill="#777"/><rect x="2.9" y="422.93" width="1.3" height="0.6" fill="#888"/><rect x="2.4" y="424.88" width="1.8" height="0.6" fill="#777"/><rect x="2.9" y="426.83" width="1.3" height="0.6" fill="#888"/><rect x="2.4" y="428.78" width="1.8" height="0.6" fill="#777"/><rect x="2.9" y="430.73" width="1.3" height="0.6" fill="#888"/><text x="1.6" y="403.79" font-size="2.8" fill="#555" transform="rotate(-90 1.6 403.79)">11</text><rect x="0" y="432.63" width="4.2" height="0.7" fill="#333"/><rect x="2.9" y="434.63" width="1.3" height="0.6" fill="#888"/><rect x="2.4" y="436.58" width="1.8" height="0.6" fill="#777"/><rect x="2.9" y="438.53" width="1.3" height="0.6" fill="#888"/><rect x="2.4" y="440.48" width="1.8" height="0.6" fill="#777"/><rect x="2.9" y="442.43" width="1.3" height="0.6" fill="#888"/><rect x="2.4" y="444.38" width="1.8" height="0.6" fill="#777"/><rect x="2.9" y="446.33" width="1.3" height="0.6" fill="#888"/><rect x="1.6" y="448.28" width="2.6" height="0.6" fill="#555"/><text x="1.6" y="434.98" font-size="2.8" fill="#555" transform="rotate(-90 1.6 434.98)">12</text><!-- menu bar -->
<rect x="0" y="0" width="800" height="6.1" fill="#fbfbfb"/>
<rect x="0" y="5.8" width="800" height="0.5" fill="#c4c4c4"/>
<g font-size="4.7" fill="#111">
<path d="M8.3 1.5c.3-.4.8-.6 1-.6.1.4-.1.8-.4 1.1-.3.3-.6.5-1 .4 0-.4.1-.7.4-.9zM10.4 3.6c0 .6.5.9.6 1-.1.4-.7 1.1-1.1 1.1-.4 0-.5-.2-.9-.2s-.6.2-.9.2c-.5 0-1.2-1.1-1.2-2 0-1 .7-1.6 1.3-1.6.4 0 .7.2.9.2.2 0 .5-.2 1-.2.3 0 .8.1 1.1.6-.5.3-.8.6-.8.9z" fill="#222"/>
<text x="17" y="4.6" font-weight="bold">Photoshop</text>
<text x="47" y="4.6">File</text>
<text x="60" y="4.6">Edit</text>
<text x="73" y="4.6">Image</text>
<text x="92" y="4.6">Layer</text>
<text x="109" y="4.6">Select</text>
<text x="128" y="4.6">Filter</text>
<text x="144" y="4.6">Analysis</text>
<text x="168" y="4.6">3D</text>
<text x="178" y="4.6">View</text>
<text x="194" y="4.6">Window</text>
<text x="217" y="4.6">Help</text>
<text x="754" y="4.6">Thu 10:05 PM</text>
</g>
<!-- status icons -->
<g>
<path d="M667.8 2.2c.8.9 1.8 1.3 2.6 1.2-.3-1 .6-2 1.6-1.7.3.1.5.3.7.4l.8-.3-.4.7.6-.1c-.1.4-.4.7-.6.9.1 1.8-1.5 3.6-3.6 3.2-.8-.1-1.3-.5-1.6-.9.7 0 1.2-.2 1.6-.5-.8-.2-1.4-.8-1.5-1.5.3 0 .5 0 .7-.1-.8-.3-1.2-1-1.1-1.6z" fill="#3d6eb4"/>
<rect x="676" y="1.2" width="4" height="4" rx=".6" fill="#222"/>
<rect x="677" y="2.2" width="2" height="2" fill="#eee"/>
<path d="M683.2 5.2v-4h1.2l1.2 2.2 1.2-2.2h1.2v4h-1v-2.4l-1.4 2.2-1.4-2.2v2.4z" fill="#333"/>
<rect x="692" y="1.3" width="4.5" height="4" rx=".8" fill="#5a9aa0"/>
<rect x="693" y="2.3" width="2.5" height="2" fill="#d8e6e6"/>
<path d="M699 5l2.5-4 2.5 4z" fill="#222"/>
<rect x="708" y="1.5" width="5" height="3.3" fill="#111"/>
<circle cx="720" cy="3.2" r="2" fill="none" stroke="#aaa" stroke-width=".5"/>
<path d="M727 3.2h4M729 2l-2 1.2 2 1.2" stroke="#aaa" stroke-width=".5" fill="none"/>
<path d="M736 2.4q2.5-2 5 0M737 3.4q1.5-1.3 3 0M738.2 4.3q.3-.4.6 0" stroke="#222" stroke-width=".7" fill="none"/>
<path d="M745 2.5h1l1.8-1.2v3.8l-1.8-1.2h-1z" fill="#222"/>
<circle cx="791" cy="2.7" r="1.3" fill="none" stroke="#222" stroke-width=".6"/>
<path d="M792 3.7l1.2 1.2" stroke="#222" stroke-width=".7"/>
</g>
<!-- app bar -->
<rect x="0" y="6.2" width="800" height="11" fill="#d6d6d6"/>
<rect x="0" y="16.8" width="800" height="0.6" fill="#9c9c9c"/>
<g fill="#333">
<rect x="4.2" y="8" width="0.4" height="8" fill="#b8b8b8"/>
<rect x="6.5" y="9.2" width="6" height="5" fill="#c8c8c8"/>
<rect x="7.5" y="10" width="1.6" height="3.4" fill="#a8a8a8"/>
<rect x="10" y="11" width="1.6" height="2.4" fill="#b0b0b0"/>
<rect x="19.5" y="9.8" width="5" height="4.4" fill="#5c5c5c"/>
<rect x="20.5" y="10.8" width="3" height="2.4" fill="#8a8a8a"/>
<rect x="30" y="10.4" width="6" height="3.8" fill="#b4b4b4" stroke="#777" stroke-width=".4"/>
<rect x="30.4" y="12" width="5.2" height="1.8" fill="#666"/>
<rect x="42.2" y="9.6" width="5.8" height="4.8" fill="#555"/>
<rect x="43" y="11" width="4.2" height="2.8" fill="#e0e0e0"/>
<path d="M49.9 11.6h1.4l-.7 1z"/>
<text text-rendering="geometricPrecision" x="57.5" y="13.2" font-size="3" fill="#222">33.3%</text>
<path d="M69.4 11.6h1.4l-.7 1z"/>
<rect x="77.6" y="9.6" width="5.2" height="4.6" fill="#555"/>
<rect x="78.4" y="10.4" width="1.4" height="3" fill="#999"/>
<rect x="80.6" y="10.4" width="1.4" height="3" fill="#999"/>
<path d="M85 11.6h1.4l-.7 1z"/>
<rect x="92" y="9.8" width="6.4" height="4.4" fill="#777"/>
<path d="M92 9.8l6.4 4.4M98.4 9.8l-6.4 4.4" stroke="#333" stroke-width=".9"/>
<path d="M99.9 11.6h1.4l-.7 1z"/>
</g>
<g>
<rect x="686" y="8.6" width="26" height="7.2" fill="#8c8c8c"/>
<text x="688.5" y="13.4" font-size="3.1" fill="#e4e4e4">ESSENTIALS</text>
<text x="717" y="13.4" font-size="3.1" fill="#b5b5b5">DESIGN</text>
<text x="737" y="13.4" font-size="3.1" fill="#b5b5b5">PAINTING</text>
<text x="760.3" y="13.6" font-size="4" fill="#8a8a8a">»</text>
<rect x="767.5" y="8" width="0.4" height="8" fill="#bbb"/>
<circle cx="773.9" cy="11.8" r="1.7" fill="none" stroke="#333" stroke-width=".8"/>
<text x="777.8" y="13.3" font-size="3.5" fill="#333">CS Live</text>

</g>
<!-- options bar -->
<rect x="0" y="17.4" width="800" height="10.8" fill="#dadada"/>
<rect x="0" y="17.4" width="800" height="0.4" fill="#e8eef2"/>
<rect x="0" y="27.8" width="800" height="0.5" fill="#8a8a8a"/>
<g>
<rect x="4.5" y="18.6" width="9" height="8.2" fill="#f8f8f8"/>
<rect x="12.6" y="18.6" width="2.6" height="8.2" fill="#b4cce4"/>
<path d="M13.1 22.2h1.6l-.8 1.2z" fill="#223"/>
<path d="M6.5 25l3.8-3.5" stroke="#333" stroke-width="1"/>
<rect x="17.8" y="18.5" width="0.4" height="8.5" fill="#bbb"/>
<path d="M22.5 25.3l3.5-3.5" stroke="#333" stroke-width="1"/>
<rect x="28.8" y="19.8" width="5.6" height="5.6" fill="#9a9a9a"/>
<path d="M29.5 25l4-4" stroke="#333" stroke-width="1"/>
<circle cx="38.5" cy="22.5" r="2" fill="#f0f0f0" stroke="#666" stroke-width=".5"/>
<path d="M36.5 25l3-3" stroke="#333" stroke-width=".9"/>
<rect x="43.6" y="18.5" width="0.4" height="8.5" fill="#bbb"/>
<rect x="45.8" y="18.6" width="7.6" height="8.2" fill="#fafafa"/>
<circle cx="49.6" cy="21.2" r="1.1" fill="#000"/>
<text x="47.7" y="25.8" font-size="2.4" fill="#444">15</text>
<rect x="53.4" y="18.6" width="2.4" height="8.2" fill="#b4cce4"/>
<path d="M53.8 22.2h1.6l-.8 1.2z" fill="#223"/>
<rect x="61.5" y="21.5" width="2.6" height="2.8" fill="#f4f4f4" stroke="#999" stroke-width=".3"/>
<text text-rendering="geometricPrecision" x="65.5" y="24.1" font-size="2.9" fill="#333">Sample All Layers</text>
<rect x="91.6" y="21.5" width="2.8" height="2.8" fill="#b8c8e0" stroke="#667" stroke-width=".3"/>
<path d="M92.1 23l.8.8 1.2-1.7" stroke="#223" stroke-width=".4" fill="none"/>
<text text-rendering="geometricPrecision" x="96" y="24.1" font-size="2.9" fill="#333">Auto-Enhance</text>
<rect x="123" y="19.6" width="25" height="6.2" rx="3" fill="#f6f6f6" stroke="#8a8a8a" stroke-width=".4"/>
<text text-rendering="geometricPrecision" x="126.2" y="23.8" font-size="2.9" fill="#222">Refine Edge...</text>
</g>
<!-- toolbox -->
<rect x="0" y="28" width="10.8" height="195.8" fill="#dedede"/>
<rect x="10.4" y="31.5" width="0.5" height="192.3" fill="#9c9c9c"/>
<rect x="0" y="223.4" width="10.8" height="0.5" fill="#9c9c9c"/>
<rect x="0" y="28" width="10.9" height="3.6" fill="#3a3a3a"/><rect x="0.8" y="29.2" width="1.8" height="1.2" fill="#8a8a8a"/><rect x="4" y="29.4" width="5.5" height=".8" fill="#5a5a5a"/>
<g fill="#3e3e3e" stroke="none" id="tools">
<path d="M2.8 37.2l2.6 2.6-1.1.1.7 1.3-.6.3-.7-1.3-.9.8z"/>
<path d="M6.4 38.2v3.2M4.9 39.8h3.1" stroke="#444" stroke-width=".6"/>
<rect x="3.4" y="44.4" width="4.4" height="4.4" fill="none" stroke="#555" stroke-width=".6" stroke-dasharray=".8 .5"/>
<circle cx="8.6" cy="49.4" r=".45"/>
<path d="M3.3 53.2c0-1.4 1.3-2 2.4-2 1.2 0 2.2.8 2.2 1.7 0 1.1-1.2 1.8-2.4 1.8-.5 0-.9-.2-1-.1l-.7 1.3" fill="none" stroke="#555" stroke-width=".6"/>
<rect x="1" y="57.8" width="8.6" height="5.6" fill="#a4a4a4"/>
<path d="M3.8 62.8l2.8-3" stroke="#222" stroke-width="1.3"/>
<circle cx="6.8" cy="59.6" r="1.1" fill="#444"/>
<circle cx="8.6" cy="63.6" r=".45"/>
<path d="M3.2 67.2h4.2v3.3M4.6 66v4h3.6" fill="none" stroke="#333" stroke-width=".8"/>
<path d="M3.6 76.8l3.4-3.4" stroke="#444" stroke-width="1"/>
<path d="M6.2 74.2l1.4-1.4" stroke="#222" stroke-width="1.6"/>
<path d="M3.2 86.3l4.3-4.3" stroke="#3a3a3a" stroke-width="1.8"/>
<circle cx="8.5" cy="86.8" r=".45"/>
<path d="M3.4 93l4.3-3.6" stroke="#333" stroke-width="1.5"/>
<circle cx="8.5" cy="93.6" r=".45"/>
<path d="M3.5 101h4.6v-1.5h-4.6z"/>
<path d="M5.2 99.5v-2h1.2v2z"/>
<circle cx="5.8" cy="96.8" r="1"/>
<path d="M3.4 107.6l4-3.8" stroke="#444" stroke-width="1.3"/>
<circle cx="8.5" cy="108" r=".45"/>
<path d="M3.2 114.6l4.2-3.6" stroke="#333" stroke-width="1.9"/>
<circle cx="8.5" cy="115.4" r=".45"/>
<rect x="3" y="118" width="4.8" height="4.4" fill="#3c3c3c"/>
<rect x="5.2" y="118.6" width="2" height="3.2" fill="#888"/>
<path d="M5.5 125l1.5 2.3c.5.9 0 2-1.5 2s-2-1.1-1.5-2z" fill="none" stroke="#555" stroke-width=".6"/>
<circle cx="4.8" cy="133.6" r="1.6"/>
<path d="M5.8 134.6l1.8 1.6" stroke="#444" stroke-width=".7"/>
<path d="M3.6 145l1.8-4.6 1.8 2.4z" fill="none" stroke="#444" stroke-width=".7"/>
<path d="M4.3 147.8h3.2M5.9 147.8v4.2" stroke="#333" stroke-width=".9"/>
<path d="M4.6 155.8l2.6 2.4-1.3.2.5 1.2" fill="#333" stroke="#333" stroke-width=".5"/>
<path d="M2.6 166.6l5-5.6" stroke="#666" stroke-width=".7"/>
<circle cx="8.5" cy="166.6" r=".45"/>
<path d="M3.4 172.6c0-1.4 1-2.6 2.4-2.6s2.4 1.2 2.4 2.6" fill="none" stroke="#444" stroke-width=".7"/>
<path d="M4.6 174.8l1.5-1.6 1.4 1.6" fill="none" stroke="#444" stroke-width=".6"/>
<path d="M3.4 181.6l2-3.6 2.2 3.6" fill="none" stroke="#444" stroke-width=".7"/>
<circle cx="8.4" cy="182" r=".45"/>
<path d="M3.6 184c.5-.8 3-.8 3.6 0" fill="none" stroke="#555" stroke-width=".6"/>
<circle cx="5.5" cy="187.6" r="1.9" fill="none" stroke="#555" stroke-width=".6"/>
<circle cx="5.2" cy="194" r="1.5" fill="none" stroke="#444" stroke-width=".7"/>
<path d="M6.2 195.2l1.6 1.6" stroke="#444" stroke-width=".8"/>
<circle cx="2.2" cy="200.6" r="1" fill="#111"/>
<path d="M6.6 199.6l1.5 1.3v-1.2" fill="none" stroke="#333" stroke-width=".5"/>
<rect x="4" y="207" width="5" height="5.6" fill="#f8f8f8" stroke="#bbb" stroke-width=".3"/>
<rect x="1" y="204" width="5.6" height="6" fill="#000"/>
<rect x="3.1" y="215.2" width="5" height="4.2" fill="#f0f0f0" stroke="#555" stroke-width=".6"/>
<circle cx="5.6" cy="217.3" r="1" fill="#aaa"/>
</g>
<!-- right panels -->
<rect x="777.5" y="28.4" width="22.5" height="3.1" fill="#383838"/><rect x="785" y="29.4" width="3" height=".9" fill="#6a6a6a"/><rect x="796.5" y="29.3" width="2" height="1.1" fill="#8a8a8a"/>
<rect x="777.6" y="31.5" width="11" height="83.8" fill="#dedede"/>
<rect x="777.5" y="31.5" width="0.6" height="83.8" fill="#8c8c8c"/>
<rect x="777.6" y="114.9" width="11" height="0.5" fill="#9c9c9c"/>
<rect x="788.6" y="31.5" width="11.4" height="111.5" fill="#dedede"/>
<rect x="788.3" y="31.5" width="0.5" height="111.5" fill="#a4a4a4"/>
<rect x="788.6" y="142.8" width="11.4" height="0.5" fill="#8c8c8c"/>
<g fill="#444">
<rect x="777.6" y="63.8" width="22.4" height="0.5" fill="#aaa"/>
<rect x="788.6" y="77.2" width="11.4" height="0.4" fill="#b4b4b4"/>
<rect x="788.6" y="114.6" width="11.4" height="0.4" fill="#a8a8a8"/>
<rect x="788.6" y="128.4" width="11.4" height="0.4" fill="#b4b4b4"/>
<circle cx="783" cy="40.2" r="2.1" fill="#5e5e5e"/>
<rect x="780.6" y="47.9" width="5.4" height="3.8" fill="#3e3e3e"/>
<rect x="780.6" y="47.9" width="5.4" height="1.1" fill="#f0f0f0"/>
<circle cx="783" cy="58.8" r="2.5" fill="#333"/>
<path d="M783 56.3a2.5 2.5 0 0 1 0 5z" fill="#aaa"/>
<path d="M781.4 70.2l1.6 2.2 1.6-2.2M783 72.4v1.2" stroke="#333" stroke-width=".8" fill="none"/>
<circle cx="783" cy="74.6" r="1" fill="#222"/>
<rect x="781" y="79.8" width="2.2" height="1.6" fill="#888"/>
<rect x="781" y="82.2" width="5" height="2.2" fill="#444"/>
<path d="M781.2 94.2l1.8-5 1.8 5" stroke="#444" stroke-width=".9" fill="none"/>
<path d="M781.8 92.4h2.4" stroke="#444" stroke-width=".5"/>
<circle cx="783" cy="100" r="1.2" fill="#444"/>
<rect x="780.8" y="107.9" width="5.2" height="3.9" fill="#555"/>
<rect x="780.8" y="107.9" width="2.6" height="1.4" fill="#bbb"/>
<path d="M792.4 41.6c.5-1.5 2-2.8 3.4-3.2l.8.6c-.4 1.5-1.8 3-3.4 3.2z" fill="#333"/>
<circle cx="793.3" cy="41.4" r="1" fill="#222"/>
<rect x="792.2" y="47.5" width="5.4" height="4" fill="#3a3a3a"/>
<rect x="792.9" y="48.1" width=".8" height="2.8" fill="#bbb"/>
<rect x="795.6" y="48.1" width=".6" height="2.8" fill="#999"/>
<path d="M792.6 61v-2.5l1.3-1.2 1 .4 1.2-1.7h.9v5z" fill="#555"/>
<circle cx="795.6" cy="57" r=".8" fill="#f4f4f4"/>
<rect x="792.2" y="71.1" width="5.4" height="4" fill="#444"/>
<circle cx="794.6" cy="72.8" r="1" fill="#eee"/>
<circle cx="794.6" cy="86.7" r="2.5" fill="#333"/>
<circle cx="794" cy="86" r="1" fill="#ccc"/>
<path d="M792.5 93.4h1.4M795.4 93.4h1.4M792.5 95.2h1.4M795.4 95.2h1.4M792.5 97h4.3" stroke="#555" stroke-width=".9"/>
<circle cx="794.5" cy="109.5" r="2.1" fill="#3a3a3a"/>
<path d="M793.3 111l2.4-3" stroke="#eee" stroke-width=".6"/>
<path d="M792.6 120.6v4.8M793.8 121.2v4" stroke="#555" stroke-width=".6"/>
<path d="M795 121l2.2-.4v4.2l-2.2.6z" fill="#444"/>
<path d="M792.4 136.4l2.3 2.3 2.3-2.3v1l-2.3 2.3-2.3-2.3z" fill="#444"/>
</g>
<!-- status bar -->
<rect x="11" y="444.2" width="766.6" height="5.8" fill="#9c9c9c"/>
<rect x="11" y="444.2" width="766.6" height="0.5" fill="#7a7a7a"/>
<rect x="11" y="448.8" width="766.6" height="1.2" fill="#eeeeee"/>
<rect x="11.2" y="444.6" width="37.3" height="5.4" fill="#e2e2e2"/>
<text text-rendering="geometricPrecision" x="13.5" y="447.9" font-size="2.6" fill="#555">Ambient Light: Doxygen(s)</text>
<rect x="49" y="444.6" width="24" height="4.2" fill="#a8a8a8"/>
<text text-rendering="geometricPrecision" x="50" y="447.6" font-size="2.5" fill="#444">Doc: 8.05M/0 bytes</text>
<rect x="74.5" y="444.6" width="5.5" height="4.2" fill="#b0b0b0"/>
<path d="M76.5 445.6l1.6 1.1-1.6 1.1z" fill="#555"/>
<rect x="770" y="445.2" width="6" height="2.6" fill="#a8a8a8"/>
</svg></body></html>
